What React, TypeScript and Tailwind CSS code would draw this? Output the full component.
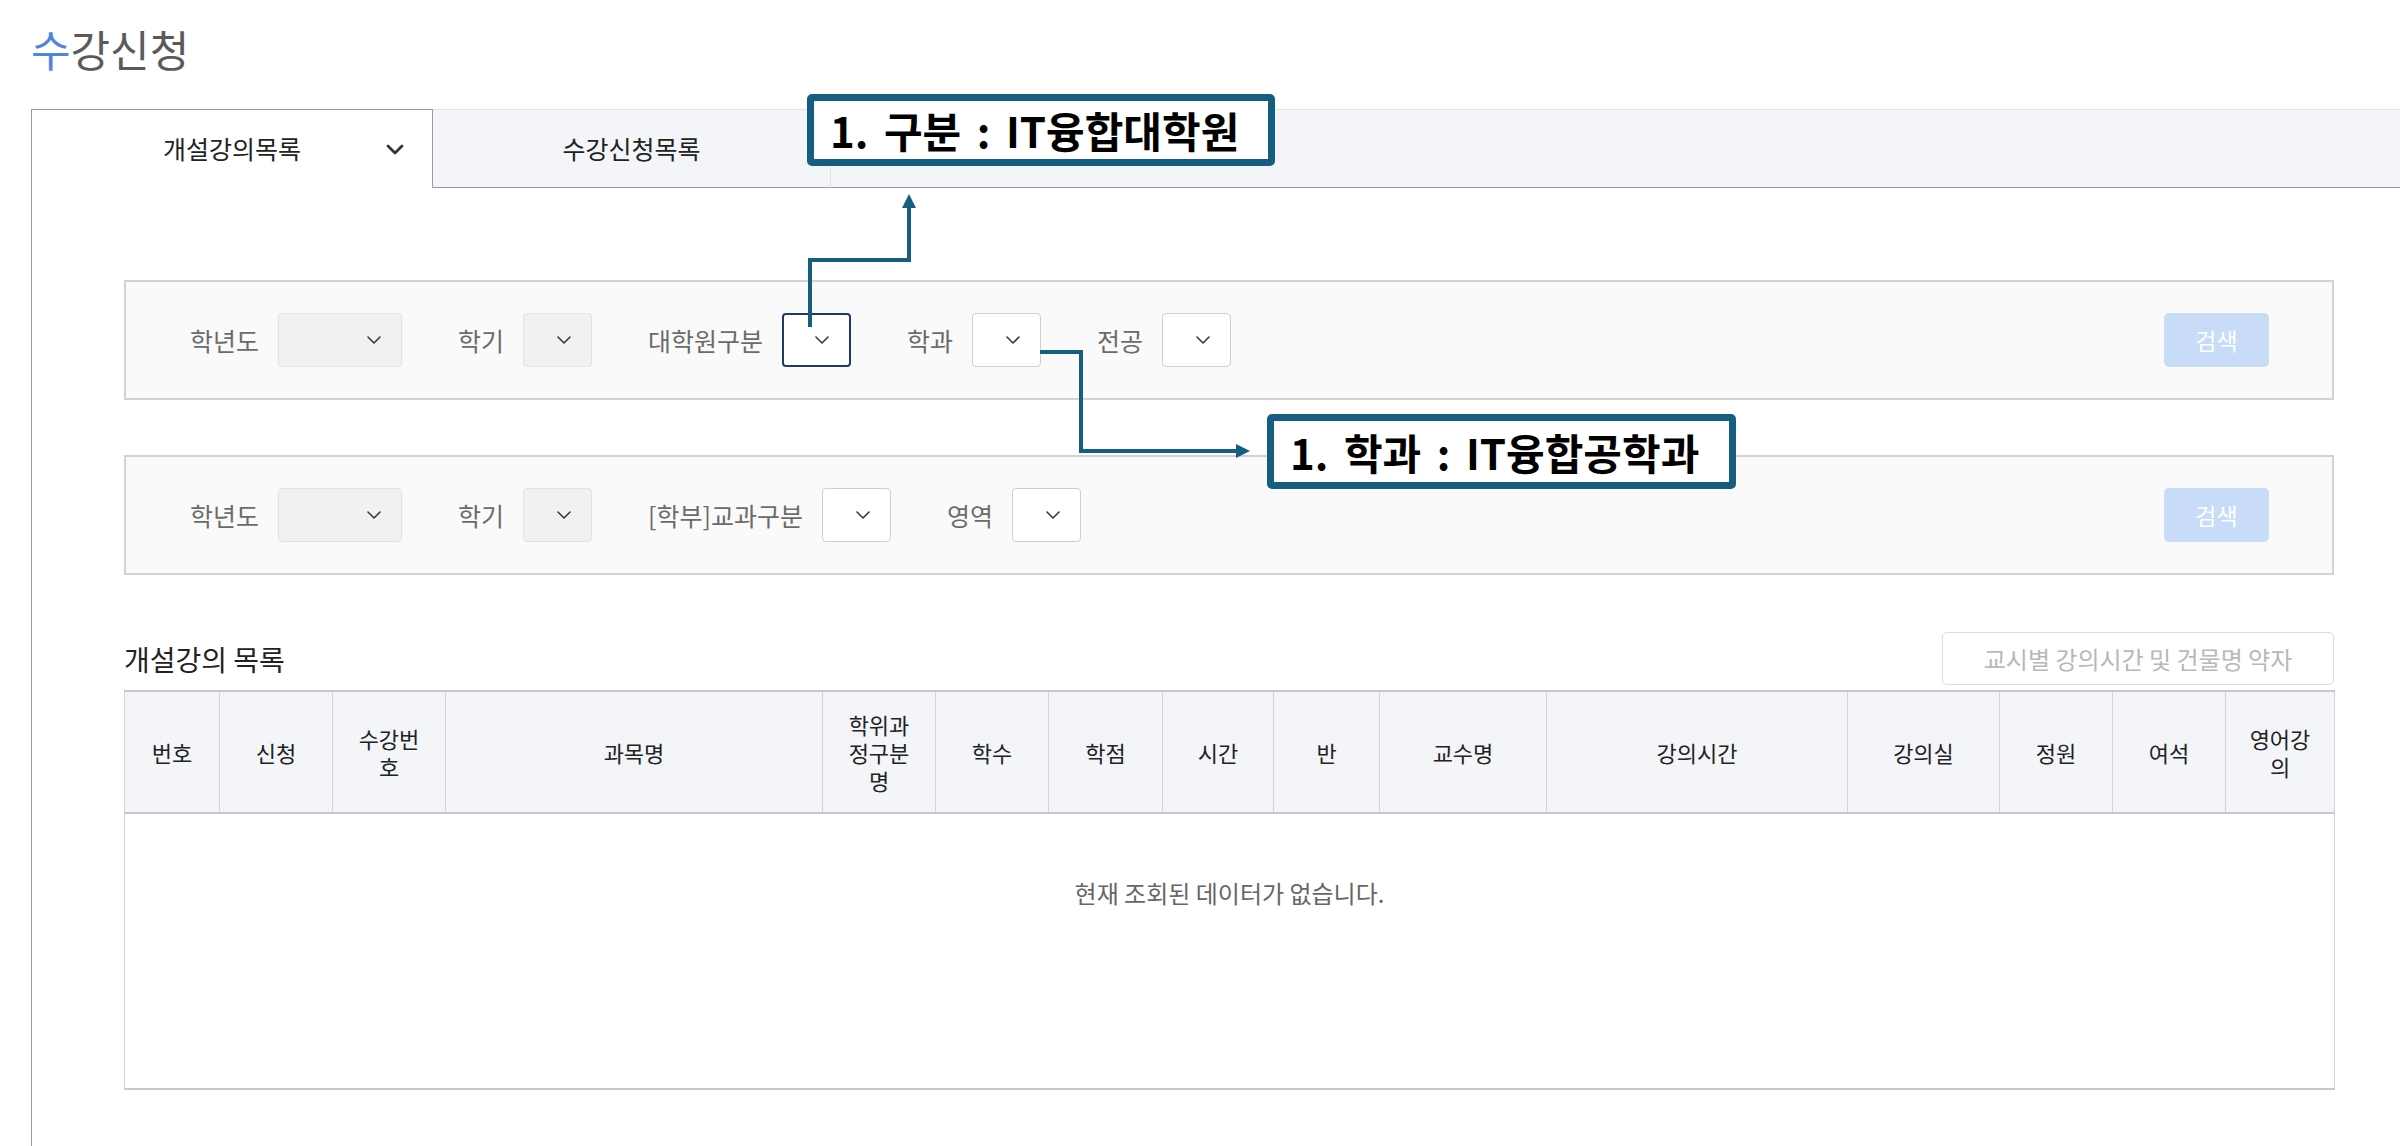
import type { ReactNode } from "react";

const cols = [
  { w: 95, label: ["번호"] },
  { w: 113, label: ["신청"] },
  { w: 113, label: ["수강번", "호"] },
  { w: 377, label: ["과목명"] },
  { w: 113, label: ["학위과", "정구분", "명"] },
  { w: 113, label: ["학수"] },
  { w: 114, label: ["학점"] },
  { w: 111, label: ["시간"] },
  { w: 106, label: ["반"] },
  { w: 167, label: ["교수명"] },
  { w: 301, label: ["강의시간"] },
  { w: 152, label: ["강의실"] },
  { w: 113, label: ["정원"] },
  { w: 113, label: ["여석"] },
  { w: 109, label: ["영어강", "의"] },
];

function Chevron() {
  return (
    <svg width="14" height="8" viewBox="0 0 14 8" fill="none">
      <path d="M1 1l6 6 6-6" stroke="#3a3a3a" strokeWidth="1.6" strokeLinecap="round" strokeLinejoin="round" />
    </svg>
  );
}

function Select(props: { w: number; disabled?: boolean; focused?: boolean }) {
  const base = "h-[54px] rounded-[4px] flex items-center justify-end pr-[20px]";
  const look = props.disabled
    ? "bg-[#f1f1f1] border border-[#e2e2e2]"
    : props.focused
    ? "bg-white border-2 border-[#1f3a66]"
    : "bg-white border border-[#cfcfcf]";
  return (
    <div className={`${base} ${look}`} style={{ width: props.w }}>
      <Chevron />
    </div>
  );
}

function Field(props: { label: string; children: ReactNode }) {
  return (
    <div className="flex items-center gap-[19px]">
      <span className="text-[25px] text-[#6b6b6b] leading-none">{props.label}</span>
      {props.children}
    </div>
  );
}

function FilterBox(props: { children: ReactNode }) {
  return (
    <div className="h-[120px] border-2 border-[#d2d2d2] bg-[#fafafa] flex items-center pl-[64px] pr-[63px]">
      <div className="flex items-center gap-[56px] flex-1">{props.children}</div>
      <button className="w-[105px] h-[54px] rounded-[5px] bg-[#c8dcf7] text-white text-[23px]">검색</button>
    </div>
  );
}

function Callout(props: { text: string; left: number; top: number; w: number; h: number }) {
  return (
    <div
      className="absolute border-[7px] border-[#155e80] rounded-[5px] bg-white flex items-center pl-[16px] text-[42px] [word-spacing:6px] font-bold text-black leading-none whitespace-nowrap"
      style={{ left: props.left, top: props.top, width: props.w, height: props.h }}
    >
      {props.text}
    </div>
  );
}

export default function App() {
  return (
    <div className="relative min-h-[1146px] bg-white font-['Noto_Sans_CJK_KR','Noto_Sans',sans-serif] overflow-hidden">
      {/* page title */}
      <div className="h-[109px] pl-[31px] pt-[24px]">
        <h1 className="text-[43px] leading-[48px] font-normal text-[#5a5a5a]">
          <span className="text-[#4d86dc]">수</span>강신청
        </h1>
      </div>

      <div className="ml-[31px] border-l border-[#9a9a9a] min-h-[1037px]">
        {/* tabs */}
        <div className="flex h-[79px]">
          <div className="w-[401px] bg-white border-t border-r border-[#9a9a9a] grid grid-cols-[1fr_auto_1fr] items-center">
            <span />
            <span className="text-[25px] text-[#222]">개설강의목록</span>
            <span className="flex justify-end pr-[28px]">
              <svg width="18" height="11" viewBox="0 0 18 11" fill="none">
                <path d="M2 2l7 7 7-7" stroke="#333" strokeWidth="2.8" strokeLinecap="round" strokeLinejoin="round" />
              </svg>
            </span>
          </div>
          <div className="w-[398px] bg-[#f4f5f8] border-t border-r border-[#e2e4e8] border-b border-b-[#9a9a9a] flex items-center justify-center">
            <span className="text-[25px] text-[#222]">수강신청목록</span>
          </div>
          <div className="flex-1 bg-[#f4f5f8] border-t border-[#e2e4e8] border-b border-b-[#9a9a9a]" />
        </div>

        <div className="pl-[92px] pr-[66px] pt-[92px]">
          <FilterBox>
            <Field label="학년도"><Select w={124} disabled /></Field>
            <Field label="학기"><Select w={69} disabled /></Field>
            <Field label="대학원구분"><Select w={69} focused /></Field>
            <Field label="학과"><Select w={69} /></Field>
            <Field label="전공"><Select w={69} /></Field>
          </FilterBox>

          <div className="mt-[55px]">
            <FilterBox>
              <Field label="학년도"><Select w={124} disabled /></Field>
              <Field label="학기"><Select w={69} disabled /></Field>
              <Field label="[학부]교과구분"><Select w={69} /></Field>
              <Field label="영역"><Select w={69} /></Field>
            </FilterBox>
          </div>

          <div className="mt-[57px] h-[53px] flex items-center justify-between">
            <h2 className="text-[28px] text-[#222] font-normal">개설강의 목록</h2>
            <button className="h-[53px] w-[392px] rounded-[5px] border border-[#dcdcdc] bg-white text-[24px] text-[#b8b8b8]">
              교시별 강의시간 및 건물명 약자
            </button>
          </div>

          <table className="mt-[5px] w-[2210px] table-fixed border-collapse">
            <colgroup>
              {cols.map((c, i) => (
                <col key={i} style={{ width: c.w }} />
              ))}
            </colgroup>
            <thead>
              <tr className="h-[122px] bg-[#f4f5f8] border-t-2 border-b-2 border-[#c9c9c9]">
                {cols.map((c, i) => (
                  <th
                    key={i}
                    className="border-x border-[#d3d3d3] text-[22px] leading-[28px] font-normal text-[#222] text-center align-middle"
                  >
                    {c.label.map((l, j) => (
                      <div key={j}>{l}</div>
                    ))}
                  </th>
                ))}
              </tr>
            </thead>
            <tbody>
              <tr className="h-[276px] border-b-2 border-[#c9c9c9]">
                <td
                  colSpan={cols.length}
                  className="border-x border-[#d3d3d3] align-top text-center pt-[61px] text-[24px] text-[#666]"
                >
                  현재 조회된 데이터가 없습니다.
                </td>
              </tr>
            </tbody>
          </table>
        </div>
      </div>

      {/* annotation arrows */}
      <svg className="absolute inset-0 pointer-events-none" width="2400" height="1146" fill="none">
        <path d="M810 327V260H909V206" stroke="#155e80" strokeWidth="4" />
        <polygon points="909,194 902,208 916,208" fill="#155e80" />
        <path d="M1040 352H1081V451H1236" stroke="#155e80" strokeWidth="4" />
        <polygon points="1250,451 1236,444 1236,458" fill="#155e80" />
      </svg>

      <Callout text="1. 구분 : IT융합대학원" left={807} top={94} w={468} h={72} />
      <Callout text="1. 학과 : IT융합공학과" left={1267} top={414} w={469} h={75} />
    </div>
  );
}
